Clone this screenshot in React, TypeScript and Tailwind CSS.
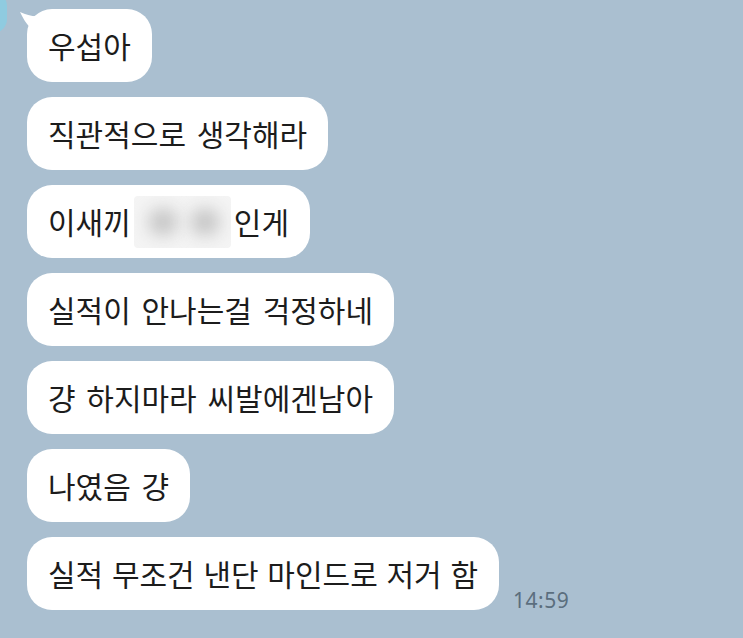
import React from "react";

const font = { fontFamily: '"Noto Sans CJK KR", "Noto Sans", sans-serif' };

function Bubble({ children, first, tight }: { children: React.ReactNode; first?: boolean; tight?: boolean }) {
  return (
    <div
      className={
        tight
          ? "relative flex h-[73px] items-center self-start rounded-[25px] bg-white px-[21px] text-[30px] text-[#1c1c1c] [word-spacing:2px]"
          : "relative flex h-[73px] items-center self-start rounded-[25px] bg-white px-[21px] text-[30px] text-[#1c1c1c] [word-spacing:4px]"
      }
    >
      {first && (
        <svg className="absolute left-[-8px] top-[2px]" width="30" height="32" viewBox="0 0 30 32">
          <path d="M1 1 C 8 4, 14 6, 22 5 L 24 24 C 14 21, 7 14, 1 1 Z" fill="#ffffff" />
        </svg>
      )}
      <span className="relative">{children}</span>
    </div>
  );
}

export default function App() {
  return (
    <div className="relative h-[638px] w-[743px] overflow-hidden bg-[#aabfd0]" style={font}>
      <div className="absolute left-[-33px] top-[-8px] h-[41px] w-[40px] rounded-[14px] bg-[#8fcbe0]" />
      <div className="flex flex-col gap-[15px] pl-[27px] pt-[9px]">
        <Bubble first>우섭아</Bubble>
        <Bubble>직관적으로 생각해라</Bubble>
        <Bubble>
          <span className="flex items-center">
            이새끼
            <span className="relative mx-[3px] inline-block h-[52px] w-[97px] overflow-hidden rounded-[4px] bg-[#f4f4f4]">
              <span className="absolute left-[14px] top-[12px] h-[28px] w-[30px] rounded-full bg-[#c8c8c8] blur-[8px]" />
              <span className="absolute left-[56px] top-[12px] h-[28px] w-[30px] rounded-full bg-[#c8c8c8] blur-[8px]" />
            </span>
            인게
          </span>
        </Bubble>
        <Bubble>실적이 안나는걸 걱정하네</Bubble>
        <Bubble>걍 하지마라 씨발에겐남아</Bubble>
        <Bubble>나였음 걍</Bubble>
        <div className="flex items-end gap-[14px]">
          <Bubble tight>실적 무조건 낸단 마인드로 저거 함</Bubble>
          <span
            className="mb-[-4px] text-[21px] leading-[28px] tracking-[0.5px] text-[#5b6e7e]"
            style={{ fontFamily: '"Noto Sans", sans-serif' }}
          >
            14:59
          </span>
        </div>
      </div>
    </div>
  );
}
